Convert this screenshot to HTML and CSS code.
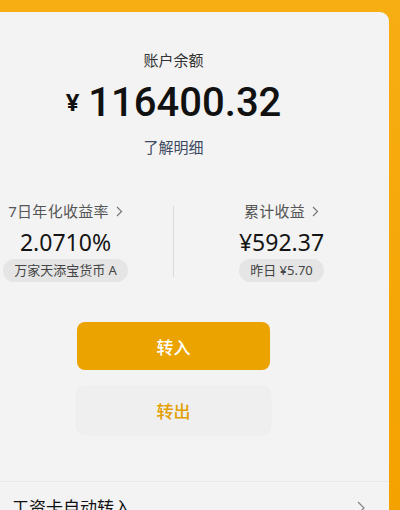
FILE: index.html
```html
<!DOCTYPE html>
<html lang="zh-CN">
<head>
<meta charset="utf-8">
<link rel="stylesheet" href="styles.css">
</head>
<body>
<div class="page">
  <div class="card">
    <div class="title">账户余额</div>
    <div class="amount"><span class="yen">¥</span><span class="num">116400.32</span></div>
    <div class="detail">了解明细</div>

    <div class="stats">
      <div class="stat">
        <div class="label">7日年化收益率<svg class="chev" viewBox="0 0 7 11" width="7" height="11"><path d="M1 1l4.5 4.5L1 10" fill="none" stroke="#777" stroke-width="1.2"/></svg></div>
        <div class="value">2.0710%</div>
        <div class="pill">万家天添宝货币 A</div>
      </div>
      <div class="vline"></div>
      <div class="stat">
        <div class="label">累计收益<svg class="chev" viewBox="0 0 7 11" width="7" height="11"><path d="M1 1l4.5 4.5L1 10" fill="none" stroke="#777" stroke-width="1.2"/></svg></div>
        <div class="value">¥592.37</div>
        <div class="pill">昨日 ¥5.70</div>
      </div>
    </div>

    <div class="buttons">
      <div class="btn btn-in">转入</div>
      <div class="btn btn-out">转出</div>
    </div>

    <div class="row">
      <span class="row-text">工资卡自动转入</span>
      <svg class="row-chev" viewBox="0 0 8 14" width="8" height="14"><path d="M1 1l6 6-6 6" fill="none" stroke="#888" stroke-width="1.3"/></svg>
    </div>
  </div>
</div>
</body>
</html>
```

FILE: styles.css
```css
html, body {
  margin: 0;
  padding: 0;
  width: 400px;
  height: 510px;
  overflow: hidden;
  background: #F5A704;
  font-family: "Noto Sans", "Noto Sans CJK SC", sans-serif;
}
.page {
  padding-top: 12px;
  background: linear-gradient(#F7AE12, #F4A200);
  height: 498px;
}
.card {
  margin-left: -42px;
  width: 431px;
  height: 498px;
  background: #F3F3F3;
  border-top-right-radius: 9px;
  padding-top: 37px;
  box-sizing: border-box;
  display: flex;
  flex-direction: column;
  align-items: center;
}
.title {
  font-size: 15px;
  line-height: 22px;
  color: #333;
}
.amount {
  margin-top: 8px;
  height: 49px;
  display: flex;
  align-items: center;
  color: #111;
  font-weight: 700;
}
.yen {
  font-size: 24px;
  margin-right: 9px;
  position: relative;
  top: -1px;
}
.num {
  font-family: Roboto, "Noto Sans", sans-serif;
  font-weight: 500;
  font-size: 40px;
}
.detail {
  margin-top: 10px;
  font-size: 15px;
  line-height: 22px;
  color: #3C4960;
}
.stats {
  margin-top: 42px;
  width: 100%;
  display: flex;
  align-items: flex-start;
}
.stat {
  flex: 1;
  display: flex;
  flex-direction: column;
  align-items: center;
}
.label {
  font-size: 15px;
  line-height: 22px;
  color: #555;
  display: flex;
  align-items: center;
  letter-spacing: 0.3px;
}
.chev {
  margin-left: 7px;
}
.value {
  margin-top: 5px;
  font-size: 23px;
  line-height: 30px;
  color: #151515;
}
.pill {
  margin-top: 2px;
  height: 23px;
  line-height: 23px;
  padding: 0 11px;
  border-radius: 12px;
  background: #E5E5E5;
  font-size: 13px;
  color: #444;
}
.vline {
  width: 1px;
  height: 71px;
  margin-top: 6px;
  background: #DADADA;
}
.buttons {
  margin-top: 40px;
  display: flex;
  flex-direction: column;
  gap: 17px;
}
.btn {
  width: 193px;
  height: 48px;
  border-radius: 8px;
  display: flex;
  align-items: center;
  justify-content: center;
  font-size: 17px;
  font-weight: 500;
}
.btn-in {
  background: #EBA300;
  color: #fff;
}
.btn-out {
  height: 47px;
  background: #EFEFEF;
  color: #E2A000;
  box-shadow: 0 0 3px rgba(0,0,0,0.06);
}
.row {
  margin-top: 47px;
  width: 100%;
  border-top: 1px solid #E8E8E8;
  box-sizing: border-box;
  padding: 14px 24px 0 54px;
  display: flex;
  align-items: center;
  justify-content: space-between;
}
.row-text {
  font-size: 17px;
  line-height: 24px;
  color: #111;
}
```
